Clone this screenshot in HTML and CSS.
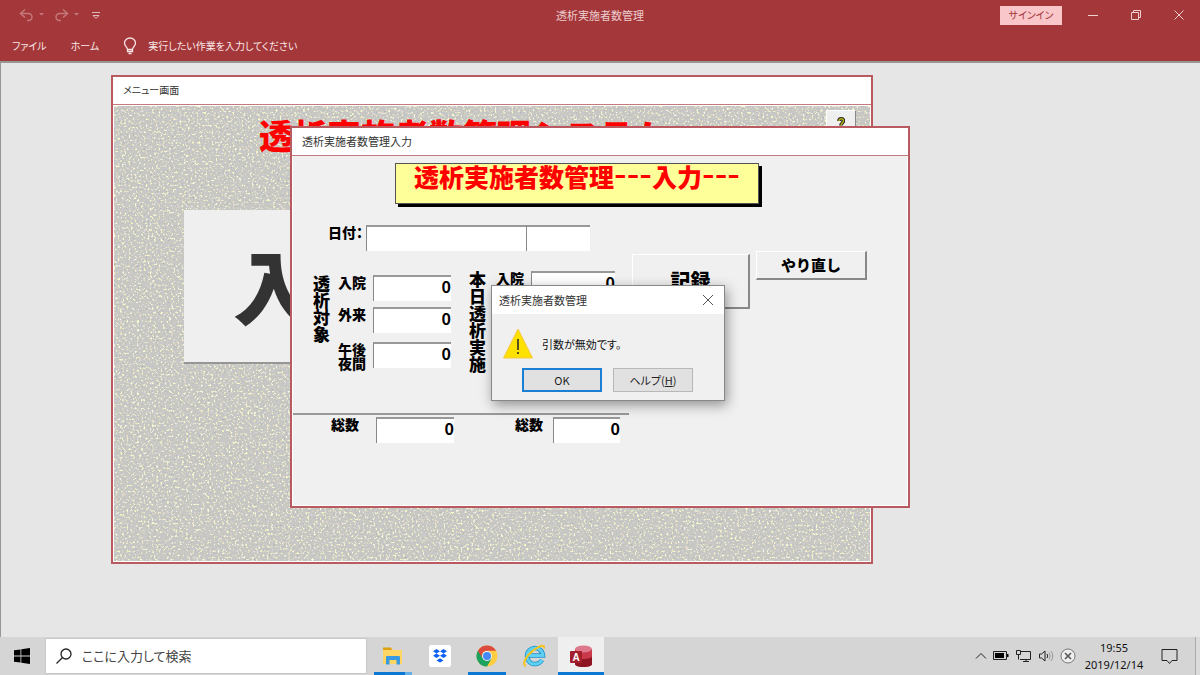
FILE: index.html
```html
<!DOCTYPE html>
<html lang="ja">
<head>
    <meta charset="UTF-8">
    <title>透析実施者数管理</title>
    <link rel="stylesheet" href="styles.css">
</head>
<body>
    <header class="app-header">
        <div class="titlebar">
            <div class="quick-access">
                <svg width="90" height="16" viewBox="0 0 90 16" fill="none" stroke="#c4787c" stroke-width="1.5">
                    <path d="M7 2.5L2.500 6.500l4.500 4M3 6.500h7.500a3.500 3.500 0 0 1 0 7H9"/>
                    <path d="M45 2.500l4.500 4-4.500 4M49 6.500h-7.500a3.500 3.500 0 0 0 0 7H43"/>
                    <path d="M21 6h5l-2.500 2.500zM56 6h5l-2.500 2.500z" fill="#c4787c" stroke="none"/>
                    <path d="M74 5.500h8M75 8.500h6l-3 3z" stroke="#e5b9bb" stroke-width="1"/>
                </svg>
            </div>
            <div class="app-title">透析実施者数管理</div>
            <div class="window-controls">
                <button class="signin">サインイン</button>
                <button class="control" aria-label="minimize">
                    <svg width="12" height="12" viewBox="0 0 12 12" stroke="#efcfd0"><path d="M1 6.500h10"/></svg>
                </button>
                <button class="control" aria-label="restore">
                    <svg width="12" height="12" viewBox="0 0 12 12" fill="none" stroke="#efcfd0"><path d="M1.500 3.500h7v7h-7zM3.500 3.500v-2h7v7h-2"/></svg>
                </button>
                <button class="control" aria-label="close">
                    <svg width="12" height="12" viewBox="0 0 12 12" stroke="#efcfd0"><path d="M1.500 1.500l9 9M10.500 1.500l-9 9"/></svg>
                </button>
            </div>
        </div>
        <nav class="ribbon">
            <a href="#">ファイル</a>
            <a href="#">ホーム</a>
            <a href="#" class="tell-me">
                <svg width="14" height="18" viewBox="0 0 14 18" fill="none" stroke="#f6e3e4" stroke-width="1.300">
                    <path d="M4.500 12.500c0-2.500-3-3.500-3-6.500a5.500 5 0 0 1 11 0c0 3-3 4-3 6.500zM4.500 12.500v2h5v-2M5.500 16.500h3"/>
                </svg>
                実行したい作業を入力してください
            </a>
        </nav>
    </header>

    <main class="workspace">
        <!-- menu form -->
        <section class="window menu-window">
            <div class="window-title">メニュー画面</div>
            <div class="menu-body">
                <svg class="texture" aria-hidden="true">
                    <filter id="grain" x="0" y="0" width="100%" height="100%" color-interpolation-filters="sRGB">
                        <feTurbulence type="fractalNoise" baseFrequency="0.47" numOctaves="2" seed="8"/>
                        <feColorMatrix values="0.8 0.2 0 0 0  0.7 0.3 0 0 0  0.5 0 0.5 0 0  0 0 0 0 1"/>
                        <feComponentTransfer>
                            <feFuncR type="table" tableValues="0.5 0.6 0.7 0.77 0.78 0.79 0.95 1 1 1"/>
                            <feFuncG type="table" tableValues="0.5 0.6 0.7 0.77 0.78 0.79 0.96 1 1 1"/>
                            <feFuncB type="table" tableValues="0.5 0.6 0.7 0.75 0.77 0.77 0.85 0.95 1 1"/>
                        </feComponentTransfer>
                    </filter>
                    <rect width="100%" height="100%" filter="url(#grain)"/>
                </svg>
                <h1 class="menu-heading">透析実施者数管理システム</h1>
                <button class="help-btn" aria-label="help">
                    <svg width="8" height="13" viewBox="0 0 8 13" fill="none">
                        <path d="M2 4c0-3 4.500-3 4.500 0 0 1.500-2.500 2-2.500 4.500" stroke="#222" stroke-width="3.500"/>
                        <path d="M2 4c0-3 4.500-3 4.500 0 0 1.500-2.500 2-2.500 4.500" stroke="#b5b012" stroke-width="1.500"/>
                        <circle cx="4" cy="11.500" r="1.500" fill="#222"/>
                    </svg>
                </button>
                <button class="big-btn">入</button>
            </div>
        </section>

        <!-- entry form -->
        <section class="window entry-window">
            <div class="window-title">透析実施者数管理入力</div>
            <form class="entry-form">
                <h2 class="banner">透析実施者数管理<span class="dash">---</span>入力<span class="dash">---</span></h2>

                <div class="date-row">
                    <label for="date">日付：</label>
                    <input type="text" id="date" class="field date-field">
                    <input type="text" class="field day-field" aria-label="曜日">
                </div>

                <div class="counts">
                    <div class="group target">
                        <div class="group-name">透析対象</div>
                        <div class="group-rows">
                            <div class="row">
                                <label for="targetIn">入院</label>
                                <input type="text" id="targetIn" class="field" value="0">
                            </div>
                            <div class="row">
                                <label for="targetOut">外来</label>
                                <input type="text" id="targetOut" class="field" value="0">
                            </div>
                            <div class="row night">
                                <label for="targetNight">午後<br>夜間</label>
                                <input type="text" id="targetNight" class="field" value="0">
                            </div>
                        </div>
                    </div>
                    <div class="group today">
                        <div class="group-name">本日透析実施</div>
                        <div class="group-rows">
                            <div class="row">
                                <label for="todayIn">入院</label>
                                <input type="text" id="todayIn" class="field" value="0">
                            </div>
                        </div>
                    </div>
                    <div class="actions">
                        <button type="button" class="form-btn record">記録</button>
                        <button type="button" class="form-btn redo">やり直し</button>
                    </div>
                </div>

                <div class="totals">
                    <label for="targetTotal">総数</label>
                    <input type="text" id="targetTotal" class="field" value="0">
                    <label for="todayTotal" class="today-label">総数</label>
                    <input type="text" id="todayTotal" class="field today-total" value="0">
                </div>
            </form>
        </section>

        <!-- error message -->
        <div class="dialog" role="alertdialog" aria-labelledby="dialogTitle">
            <div class="dialog-title">
                <span id="dialogTitle">透析実施者数管理</span>
                <button class="dialog-close" aria-label="close">
                    <svg width="12" height="12" viewBox="0 0 12 12" stroke="#555"><path d="M1 1l10 10M11 1L1 11"/></svg>
                </button>
            </div>
            <div class="dialog-message">
                <svg width="30" height="31" viewBox="0 0 30 31">
                    <path d="M15 1L29.500 30H0.500z" fill="#ffe100" stroke="#f5c542"/>
                    <path d="M15 11v11M15 24v2" stroke="#222" stroke-width="1.500"/>
                </svg>
                <p>引数が無効です。</p>
            </div>
            <div class="dialog-buttons">
                <button class="dialog-btn default">OK</button>
                <button class="dialog-btn">ヘルプ(<u>H</u>)</button>
            </div>
        </div>
    </main>

    <footer class="taskbar">
        <button class="start" aria-label="start">
            <svg width="16" height="16" viewBox="0 0 16 16">
                <path d="M0 2.300l6.500-.9v6.200H0zM7.300 1.300L16 0v7.600H7.300zM0 8.400h6.500v6.200L0 13.700zM7.300 8.400H16V16l-8.700-1.300z"/>
            </svg>
        </button>
        <div class="search">
            <svg width="16" height="16" viewBox="0 0 16 16" fill="none" stroke="#222" stroke-width="1.300">
                <circle cx="10" cy="6" r="5"/>
                <path d="M6.500 9.500L0.500 15.500"/>
            </svg>
            <input type="text" placeholder="ここに入力して検索" aria-label="検索">
        </div>
        <div class="apps">
            <button class="app open stacked" aria-label="explorer">
                <svg width="22" height="20" viewBox="0 0 22 20">
                    <path d="M1 2h8l2 2h9v14H1z" fill="#ffd563"/>
                    <path d="M1 1.500h8l1 2.500H1z" fill="#dfa012"/>
                    <path d="M4 11q0-1 1-1h12q1 0 1 1v7.500h-3.500V14h-7v4.500H4z" fill="#3a9adf"/>
                </svg>
            </button>
            <button class="app" aria-label="dropbox">
                <svg width="24" height="24" viewBox="0 0 24 24">
                    <rect x="1" y="1" width="22" height="22" rx="2" fill="#fff"/>
                    <path d="M8.500 5l3.500 2.200-3.500 2.200L5 7.200zM15.500 5L19 7.200l-3.500 2.200L12 7.200zM8.500 9.500l3.500 2.200-3.500 2.200L5 11.700zM15.500 9.500l3.500 2.200-3.500 2.200-3.500-2.200zM12 14.200l3.500 2.200-3.500 2.200-3.500-2.200z" fill="#0d61f5"/>
                </svg>
            </button>
            <button class="app open" aria-label="chrome">
                <svg width="22" height="22" viewBox="0 0 22 22">
                    <circle cx="11" cy="11" r="10.500" fill="#ffcd41"/>
                    <path d="M11 11L1.900 5.700A10.500 10.500 0 0 0 11 21.500l4.600-7.900z" fill="#1da260"/>
                    <path d="M1.900 5.700A10.500 10.500 0 0 1 20.100 5.700H11a5.300 5.300 0 0 0-4.600 7.900z" fill="#dd4b3e"/>
                    <circle cx="11" cy="11" r="5" fill="#f1f1f1"/>
                    <circle cx="11" cy="11" r="4" fill="#4688f4"/>
                </svg>
            </button>
            <button class="app" aria-label="internet explorer">
                <svg width="24" height="24" viewBox="0 0 24 24" fill="none">
                    <path d="M20 16a8 8 0 1 1 1-4.500H7" stroke="#1c8fc9" stroke-width="4.500"/>
                    <path d="M20 16a8 8 0 1 1 1-4.500H7" stroke="#5fd0f3" stroke-width="3"/>
                    <path d="M4 22c-4-1-1-9 6-14.500S23-.5 22 4.500" stroke="#f6c51c" stroke-width="2"/>
                </svg>
            </button>
            <button class="app open active" aria-label="access">
                <svg width="24" height="24" viewBox="0 0 24 24">
                    <path d="M6 5v15c0 4 17 4 17 0V5z" fill="#b5202e"/>
                    <path d="M6 12c0 4 17 4 17 0v8c0 4-17 4-17 0z" fill="#8d1422"/>
                    <path d="M6 5c0 4 17 4 17 0v7c0 4-17 4-17 0z" fill="#c9394a"/>
                    <ellipse cx="14.500" cy="5" rx="8.500" ry="3.500" fill="#e0788b"/>
                    <rect x="1" y="7" width="12" height="12" rx="1" fill="#a51e2c"/>
                    <text x="7" y="17" class="access-letter">A</text>
                </svg>
            </button>
        </div>
        <div class="tray">
            <svg width="12" height="8" viewBox="0 0 12 8" fill="none" stroke="#222"><path d="M1 6.500l5-5 5 5"/></svg>
            <svg width="16" height="10" viewBox="0 0 16 10"><path d="M.5.500h13v8H.5z" fill="none" stroke="#222"/><path d="M2 2h9v5H2zM14 3h1.500v3H14z"/></svg>
            <svg width="17" height="14" viewBox="0 0 17 14" fill="none" stroke="#222"><path d="M6 2.500h9.500v8H5M8 12.500h6M11 10.500v2M1.500 1.500h4v4h-4zM3.500 5.500v5"/></svg>
            <svg width="16" height="14" viewBox="0 0 16 14" fill="none" stroke="#222"><path d="M1.500 5h2l3.500-3v10l-3.500-3h-2z"/><path d="M9 5q1.500 2 0 4"/><path d="M11 3.500q2.500 3.500 0 7M13 2q3.500 5 0 10" stroke="#999"/></svg>
            <svg width="16" height="16" viewBox="0 0 16 16" fill="none"><circle cx="8" cy="8" r="7" fill="#eee" stroke="#777"/><path d="M5 5l6 6M11 5l-6 6" stroke="#555" stroke-width="1.600"/></svg>
        </div>
        <div class="clock">19:55<br>2019/12/14</div>
        <button class="notice" aria-label="notifications">
            <svg width="17" height="17" viewBox="0 0 17 17" fill="none" stroke="#222"><path d="M1 1.500h15v11h-5l-2.500 3-2.500-3H1z"/></svg>
        </button>
    </footer>
</body>
</html>
```

FILE: styles.css
```css
* {
    box-sizing: border-box;
}

body {
    margin: 0;
    height: 100vh;
    display: flex;
    flex-direction: column;
    overflow: hidden;
    font-family: "Noto Sans CJK JP", sans-serif;
    font-feature-settings: "palt";
    font-size: 11px;
    line-height: 16px;
    color: #333;
}

button, input {
    font: inherit;
    font-feature-settings: inherit;
    color: inherit;
    padding: 0;
    border: 0;
    border-radius: 0;
    background: none;
}

svg {
    flex: none;
}

/* header */
.app-header {
    background-color: #a4373a;
    color: #f8e8e8;
}

.titlebar {
    display: grid;
    grid-template-columns: 1fr auto 1fr;
    align-items: center;
    height: 30px;
}

.quick-access {
    display: flex;
    padding-left: 18px;
}

.app-title {
    color: #eccccd;
}

.window-controls {
    display: flex;
    justify-content: flex-end;
    align-items: center;
}

.signin {
    width: 62px;
    height: 19px;
    margin-right: 9px;
    background-color: #f9c6ca;
    color: #a4373a;
    font-size: 10px;
}

.control {
    width: 43px;
    height: 28px;
    display: flex;
    align-items: center;
    justify-content: center;
}

.ribbon {
    display: flex;
    align-items: center;
    gap: 24px;
    height: 31px;
    padding-left: 12px;
    font-size: 10px;
}

.ribbon a {
    color: inherit;
    text-decoration: none;
}

.ribbon .tell-me {
    display: flex;
    align-items: center;
    gap: 11px;
}

/* desktop area */
.workspace {
    position: relative;
    flex: 1;
    background-color: #e6e6e6;
    border-top: 2px solid #969696;
    border-left: 1px solid #969696;
}

.window {
    position: absolute;
    display: flex;
    flex-direction: column;
    background-color: #fff;
    border: 2px solid #b85a5f;
}

.window-title {
    height: 28px;
    padding-left: 10px;
    line-height: 26px;
    border-bottom: 1px solid #c4797d;
}

.menu-window {
    left: 110px;
    top: 12px;
    width: 762px;
    height: 489px;
}

.menu-window .window-title {
    font-size: 10px;
}

.menu-body {
    position: relative;
    flex: 1;
    margin: 1px;
    display: grid;
    grid-template-columns: 1fr 30px;
    grid-template-rows: 104px 154px;
    padding: 0 14px 0 70px;
}

.texture {
    position: absolute;
    width: 100%;
    height: 100%;
}

.menu-heading {
    position: relative;
    margin: 6px 0 0 75px;
    color: #f00;
    font-size: 34px;
    line-height: 46px;
    font-weight: 900;
    font-feature-settings: normal;
}

.help-btn {
    position: relative;
    height: 30px;
    margin-top: 4px;
    background-color: #efefef;
    border: 1px solid #fff;
    border-right-color: #888;
}

.big-btn {
    position: relative;
    width: 260px;
    padding: 0 0 6px 49px;
    background-color: #efefef;
    border-bottom: 2px solid #969696;
    color: #333;
    font-size: 80px;
    line-height: 80px;
    font-weight: 900;
    text-align: left;
}

.entry-window {
    left: 289px;
    top: 63px;
    width: 620px;
    height: 382px;
}

.entry-form {
    flex: 1;
    margin: 0 1px 1px;
    background-color: #f0f0f0;
    color: #000;
    font-size: 14px;
    line-height: 14px;
    font-weight: 900;
    font-feature-settings: normal;
}

.banner {
    width: 364px;
    height: 41px;
    margin: 7px 0 0 102px;
    padding-left: 18px;
    background-color: #ff9;
    border: 1px solid #555;
    box-shadow: 3px 3px #000;
    color: #f00;
    font-size: 25px;
    line-height: 24px;
    font-weight: 900;
    white-space: nowrap;
}

.dash {
    font-family: "Liberation Sans", sans-serif;
    font-size: 38px;
    line-height: 0;
    font-weight: normal;
}

.field {
    width: 78px;
    height: 26px;
    padding: 0 0 6px;
    background-color: #fff;
    border-top: 2px solid #999;
    border-left: 1px solid #888;
    font-size: 16px;
    font-weight: 700;
    text-align: right;
}

.date-row {
    display: flex;
    padding: 21px 0 0 35px;
}

.date-row label {
    width: 38px;
    font-feature-settings: "palt";
}

.date-row .date-field {
    width: 160px;
}

.date-row .day-field {
    width: 64px;
}

.counts {
    display: flex;
    align-items: flex-start;
    height: 162px;
}

.group {
    display: flex;
}

.target {
    padding: 24px 0 0 19px;
}

.today {
    padding: 20px 0 0 17px;
}

.group-name {
    width: 18px;
    margin-right: 8px;
    font-size: 17px;
    line-height: 18px;
    writing-mode: vertical-rl;
}

.group-rows {
    display: flex;
    flex-direction: column;
    gap: 6px;
}

.row {
    display: flex;
}

.row label {
    width: 35px;
}

.night {
    padding-top: 3px;
}

.today .group-name {
    margin-right: 10px;
}

.today .field {
    width: 84px;
}

.actions {
    display: flex;
    align-items: flex-start;
    gap: 6px;
    padding-left: 17px;
}

.form-btn {
    background-color: #f0f0f0;
    border: 1px solid #fff;
    border-right: 2px solid #888;
    border-bottom: 2px solid #888;
    font-weight: 900;
}

.record {
    width: 118px;
    height: 55px;
    margin-top: 3px;
    font-size: 20px;
}

.redo {
    width: 111px;
    height: 29px;
    font-size: 15px;
}

.totals {
    display: flex;
    width: 336px;
    padding: 2px 0 0 38px;
    border-top: 2px solid #999;
}

.totals label {
    width: 45px;
}

.totals .today-label {
    width: 38px;
    margin-left: 61px;
}

.totals .today-total {
    width: 67px;
}

/* message box */
.dialog {
    position: absolute;
    left: 490px;
    top: 222px;
    width: 234px;
    height: 116px;
    background-color: #f0f0f0;
    border: 1px solid #888;
    box-shadow: 2px 4px 12px rgba(0, 0, 0, 0.4);
}

.dialog-title {
    display: flex;
    justify-content: space-between;
    align-items: center;
    height: 28px;
    padding: 0 10px 0 7px;
    background-color: #fff;
}

.dialog-close {
    display: flex;
}

.dialog-message {
    display: flex;
    align-items: center;
    gap: 9px;
    padding: 14px 0 9px 11px;
    color: #111;
}

.dialog-message p {
    margin: 0;
}

.dialog-buttons {
    display: flex;
    gap: 11px;
    padding-left: 30px;
}

.dialog-btn {
    width: 80px;
    height: 24px;
    background-color: #e1e1e1;
    border: 1px solid #b8b8b8;
    color: #222;
}

.dialog-btn.default {
    border: 2px solid #1b7fd4;
}

/* taskbar */
.taskbar {
    display: flex;
    align-items: center;
    height: 38px;
    background-color: #d5d5d5;
    border-right: 4px solid #dcdcdc;
}

.start {
    width: 45px;
    height: 100%;
    padding-left: 14px;
    display: flex;
    align-items: center;
}

.search {
    width: 322px;
    height: 36px;
    display: flex;
    align-items: center;
    gap: 10px;
    padding-left: 10px;
    background-color: #fff;
    border: 1px solid #c8c8c8;
}

.search input {
    flex: 1;
    min-width: 0;
    font-size: 13px;
    outline: 0;
}

.search input::placeholder {
    color: #444;
    opacity: 1;
}

.apps {
    display: flex;
    gap: 1px;
    height: 100%;
    padding-left: 3px;
}

.app {
    position: relative;
    width: 46px;
    display: flex;
    align-items: center;
    justify-content: center;
}

.app.open::after {
    content: "";
    position: absolute;
    left: 4px;
    right: 4px;
    bottom: 0;
    height: 3px;
    background-color: #0c78d4;
}

.app.stacked::after {
    border-right: 7px solid #65aee6;
}

.app.active {
    background-color: #efefef;
}

.app.active::after {
    left: 0;
    right: 0;
}

.access-letter {
    fill: #fff;
    font: bold 10px "Liberation Sans", sans-serif;
    text-anchor: middle;
}

.tray {
    display: flex;
    align-items: center;
    gap: 6px;
    margin-left: auto;
}

.clock {
    width: 76px;
    font-family: "Noto Sans", sans-serif;
    font-size: 11px;
    line-height: 17px;
    text-align: center;
    color: #111;
}

.notice {
    width: 44px;
    height: 100%;
    display: flex;
    align-items: center;
    justify-content: center;
    border-right: 1px solid #aaa;
    padding-right: 8px;
}
```
